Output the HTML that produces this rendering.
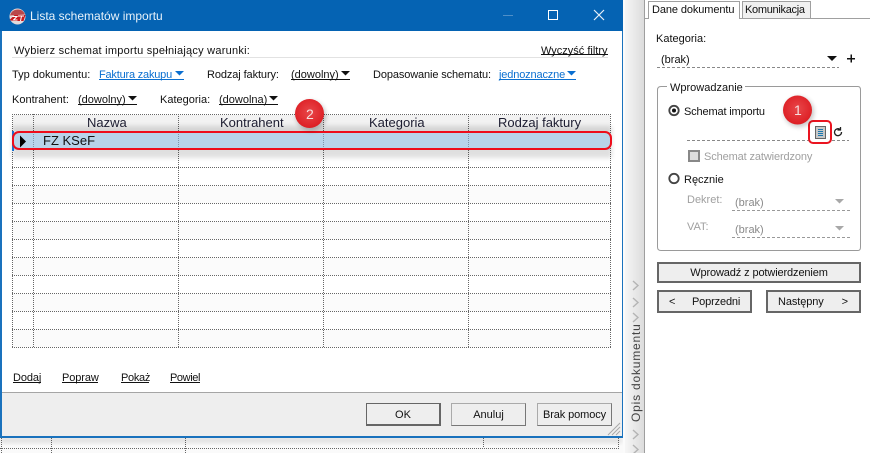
<!DOCTYPE html>
<html lang="pl"><head><meta charset="utf-8"><title>Lista schematów importu</title>
<style>
html,body{margin:0;padding:0}
body{width:870px;height:453px;overflow:hidden;position:relative;background:#fff;font-family:"Liberation Sans",sans-serif;font-size:11px;color:#111}
svg.l{position:absolute;left:0;top:0}
.t{position:absolute;white-space:nowrap;line-height:14px}
.b{color:#0a6fd0}
.g{color:#a0a0a0}
.h{font-size:13px;line-height:16px;color:#1c1c30}
.btn{position:absolute;box-sizing:border-box;background:#eee;text-align:center;font-size:11px;white-space:nowrap}
</style></head><body>
<svg class="l" width="870" height="453" viewBox="0 0 870 453" shape-rendering="crispEdges">
<defs>
<linearGradient id="st" x1="0" x2="1" y1="0" y2="0"><stop offset="0" stop-color="#f6f6f6"/><stop offset="1" stop-color="#dcdcdc"/></linearGradient>
<filter id="s2" x="-40%" y="-40%" width="180%" height="180%"><feGaussianBlur stdDeviation="2.5"/></filter>
<radialGradient id="rb" cx=".5" cy=".45" r=".6"><stop offset="0" stop-color="#e8474a"/><stop offset="1" stop-color="#dc1a20"/></radialGradient>
</defs>
<rect x="0" y="437" width="630" height="16" fill="#fafafa"/>
<g stroke="#666" stroke-dasharray="1 1" fill="none">
<path d="M0 448.500H619M1.500 438V453M51.500 438V453M185.500 438V453M483.500 438V448M618.500 438V448"/>
</g>
<rect x="0" y="437" width="622" height="6" fill="#000" opacity=".1" filter="url(#s2)"/>
<!-- side strip -->
<rect x="625" y="0" width="19" height="453" fill="url(#st)"/>
<rect x="623" y="0" width="2" height="453" fill="#fbfbfb"/>
<rect x="644" y="0" width="1" height="453" fill="#9e9e9e"/>
<g fill="none" stroke="#b4b4b4" stroke-width="1.400" shape-rendering="geometricPrecision">
<path d="M633 281l5 4.500-5 4.500M633 298l5 4.500-5 4.500M633 313l5 4.500-5 4.500M633 430l5 4.500-5 4.500M633 445l5 4.500-5 4.500"/>
</g>
<!-- window -->
<rect x="0" y="0" width="623" height="438" fill="#1a72bd"/>
<rect x="0" y="0" width="623" height="31" fill="#0563b3"/>
<rect x="2" y="31" width="620" height="361" fill="#fff"/>
<rect x="2" y="392" width="620" height="44" fill="#eee"/>
<rect x="2" y="392" width="620" height="1" fill="#a5a5a5"/>
<!-- separator -->
<rect x="12" y="57" width="596" height="1" fill="#e2e2e2"/>
<!-- titlebar controls -->
<rect x="503" y="15" width="10" height="1" fill="#4f8fc8"/>
<rect x="548.500" y="10.500" width="9" height="9" fill="none" stroke="#fff"/>
<path d="M594 10L604 20M604 10L594 20" stroke="#e8f0f8" stroke-width="1.200" shape-rendering="geometricPrecision"/>
<!-- logo -->
<g shape-rendering="geometricPrecision">
<circle cx="17.500" cy="16.500" r="8" fill="#e4dada"/>
<path d="M10 15.500C11 11.500 14 9.500 18 9.500c3.500 0 6 2 7 5z" fill="#b9474a"/>
<path d="M9.500 20l5-5h11l-2 6H13z" fill="#c8191f"/>
<path d="M12.500 16.500h4.500l-3.500 3.500h4M18 16h6M21.500 16l-1 5" stroke="#fff" stroke-width="1" fill="none"/>
</g>
<!-- underlines -->
<g fill="#111">
<rect x="541" y="54" width="67" height="1"/>
<rect x="291" y="79" width="59" height="1"/>
<rect x="78" y="104" width="59" height="1"/>
<rect x="219" y="104" width="59" height="1"/>
<rect x="13" y="382" width="28" height="1"/>
<rect x="62" y="382" width="36" height="1"/>
<rect x="121" y="382" width="28" height="1"/>
<rect x="170" y="382" width="30" height="1"/>
</g>
<g fill="#0a6fd0">
<rect x="99" y="79" width="85" height="1"/>
<rect x="499" y="79" width="77" height="1"/>
</g>
<!-- grid -->
<rect x="13" y="115" width="597" height="16" fill="#f2f2f2"/>
<g fill="#fbfbfb"><rect x="13" y="186" width="597" height="17"/><rect x="13" y="222" width="597" height="17"/><rect x="13" y="258" width="597" height="17"/><rect x="13" y="294" width="597" height="17"/><rect x="13" y="330" width="597" height="17"/></g>
<g stroke="#666" stroke-dasharray="1 1" fill="none">
<path d="M12 114.500H611M12 167.500H611M12 185.500H611M12 203.500H611M12 221.500H611M12 239.500H611M12 257.500H611M12 275.500H611M12 293.500H611M12 311.500H611M12 329.500H611M12 347.500H611"/>
<path d="M12.500 114V348M33.500 114V348M178.500 114V348M323.500 114V348M468.500 114V348M610.500 114V348"/>
</g>
<rect x="12" y="126" width="600" height="32" fill="#000" opacity=".12" filter="url(#s2)"/>
<rect x="13" y="132" width="597" height="18" fill="#b8d3e9"/>
<rect x="12" y="131" width="2" height="20" fill="#1a72d0"/>
<g stroke="#7d93a8" stroke-dasharray="1 1" fill="none"><path d="M33.500 132V150M178.500 132V150M323.500 132V150M468.500 132V150"/></g>
<path d="M20 135.500L26 141.500L20 147.500z" fill="#000" shape-rendering="geometricPrecision"/>
<rect x="13" y="132" width="598" height="17" rx="6" fill="none" stroke="#ee0d1b" stroke-width="2" shape-rendering="geometricPrecision"/>
<!-- red badge 2 -->
<g shape-rendering="geometricPrecision">
<circle cx="311" cy="116" r="15" fill="#000" opacity=".22" filter="url(#s2)"/>
<circle cx="309.500" cy="113.500" r="14.500" fill="url(#rb)"/>
<path d="M608 435L620 423M612 435L620 427M616 435L620 431" stroke="#a8a8a8" stroke-width="1" fill="none"/>
</g>
<!-- right panel -->
<rect x="645" y="18" width="225" height="435" fill="#fff"/>
<path d="M645 18.500H648M739 18.500H870" stroke="#a0a0a0"/>
<path d="M648.500 19V1.500H739.500V19" fill="#fff" stroke="#a0a0a0"/>
<path d="M742.500 18V1.500H810.500V18" fill="#f0f0f0" stroke="#a0a0a0"/>
<path d="M657 67.500H839" stroke="#888" stroke-dasharray="3 2"/>
<path d="M827 56h10l-5 5z" fill="#111" shape-rendering="geometricPrecision"/>
<path d="M847 58.500h8M851 54.500v8" stroke="#111" stroke-width="1.500"/>
<!-- group -->
<path d="M667 86.500H661Q657.500 86.500 657.500 90V247Q657.500 250.500 661 250.500H858Q860.500 250.500 860.500 247V90Q860.500 86.500 858 86.500H745" fill="none" stroke="#9a9a9a" shape-rendering="geometricPrecision"/>
<g shape-rendering="geometricPrecision">
<circle cx="674" cy="110.500" r="4.700" fill="#fff" stroke="#444" stroke-width="1.800"/><circle cx="674" cy="110.500" r="2" fill="#111"/>
<circle cx="674" cy="178.500" r="4.700" fill="#fff" stroke="#444" stroke-width="1.800"/>
</g>
<path d="M687 140.500H849" stroke="#888" stroke-dasharray="3 2"/>
<rect x="689" y="151" width="10" height="10" fill="#ddd" stroke="#888" stroke-width="2"/>
<path d="M732 210.500H850M732 237.500H850" stroke="#999" stroke-dasharray="3 2"/>
<path d="M835 199h9l-4.500 4.500zM835 226h9l-4.500 4.500z" fill="#a8a8a8" shape-rendering="geometricPrecision"/>
<!-- doc icon -->
<rect x="809" y="121" width="22" height="22" rx="4" fill="#fff" stroke="#ea1420" stroke-width="2" shape-rendering="geometricPrecision"/>
<rect x="815" y="126" width="11" height="13" fill="#c8c8c8"/>
<rect x="815.500" y="126.500" width="10" height="12" fill="none" stroke="#666"/>
<path d="M818 129.500h5M818 131.500h5M818 133.500h5M818 135.500h5" stroke="#1a78b0"/>
<path d="M841.500 132A3.500 3.500 0 1 1 840 129.300M840.500 127v3h-3" fill="none" stroke="#222" stroke-width="1.300" shape-rendering="geometricPrecision"/>
<!-- badge 1 -->
<g shape-rendering="geometricPrecision">
<circle cx="799" cy="112" r="15" fill="#000" opacity=".22" filter="url(#s2)"/>
<circle cx="797.500" cy="110" r="14.500" fill="url(#rb)"/>
</g>
<!-- filter arrows -->
<path d="M175 71h9l-4.500 4.500z" fill="#0a6fd0" shape-rendering="geometricPrecision"/>
<path d="M341 71h9l-4.500 4.500z" fill="#111" shape-rendering="geometricPrecision"/>
<path d="M567 71h9l-4.500 4.500z" fill="#0a6fd0" shape-rendering="geometricPrecision"/>
<path d="M128 96h9l-4.500 4.500z" fill="#111" shape-rendering="geometricPrecision"/>
<path d="M269 96h9l-4.500 4.500z" fill="#111" shape-rendering="geometricPrecision"/>
</svg>

<div class="t" style="left:30px;top:8px;font-size:12px;line-height:16px;color:#e8f2fa">Lista schematów importu</div>
<div class="t" style="left:14px;top:44px;letter-spacing:.24px">Wybierz schemat importu spełniający warunki:</div>
<div class="t" style="left:541px;top:44px">Wyczyść filtry</div>

<div class="t" style="left:12px;top:68px">Typ dokumentu:</div>
<div class="t b" style="left:99px;top:68px;letter-spacing:-.2px">Faktura zakupu</div>
<div class="t" style="left:207px;top:68px;letter-spacing:-.1px">Rodzaj faktury:</div>
<div class="t" style="left:291px;top:68px">(dowolny)</div>
<div class="t" style="left:373px;top:68px;letter-spacing:-.12px">Dopasowanie schematu:</div>
<div class="t b" style="left:499px;top:68px;letter-spacing:-.15px">jednoznaczne</div>

<div class="t" style="left:12px;top:93px">Kontrahent:</div>
<div class="t" style="left:78px;top:93px">(dowolny)</div>
<div class="t" style="left:160px;top:93px">Kategoria:</div>
<div class="t" style="left:219px;top:93px">(dowolna)</div>

<div class="t h" style="left:87px;top:115px">Nazwa</div>
<div class="t h" style="left:220px;top:115px">Kontrahent</div>
<div class="t h" style="left:369px;top:115px">Kategoria</div>
<div class="t h" style="left:498px;top:115px">Rodzaj faktury</div>
<div class="t" style="left:43px;top:133px;font-size:13px;line-height:16px">FZ KSeF</div>

<div class="t" style="left:306px;top:106px;font-size:14px;line-height:16px;color:#f6dede">2</div>
<div class="t" style="left:794px;top:102px;font-size:14px;line-height:16px;color:#f6dede">1</div>

<div class="t" style="left:13px;top:371px;letter-spacing:-.1px">Dodaj</div>
<div class="t" style="left:62px;top:371px;letter-spacing:-.1px">Popraw</div>
<div class="t" style="left:121px;top:371px;letter-spacing:-.3px">Pokaż</div>
<div class="t" style="left:170px;top:371px;letter-spacing:-.4px">Powiel</div>

<div class="btn" style="left:366px;top:403px;width:75px;height:23px;border:1px solid #666;border-bottom-width:2px;border-right-width:2px;line-height:22px">OK</div>
<div class="btn" style="left:451px;top:403px;width:75px;height:23px;border:1px solid #aaa;border-bottom-color:#777;border-right-color:#777;line-height:22px">Anuluj</div>
<div class="btn" style="left:537px;top:403px;width:75px;height:23px;border:1px solid #aaa;border-bottom-color:#777;border-right-color:#777;line-height:22px;letter-spacing:-.1px">Brak pomocy</div>

<div class="t" style="left:629px;top:422px;font-size:12px;line-height:14px;color:#444;letter-spacing:.8px;transform-origin:0 0;transform:rotate(-90deg)">Opis dokumentu</div>

<div class="t" style="left:652px;top:3px;letter-spacing:-.1px">Dane dokumentu</div>
<div class="t" style="left:745px;top:3px;letter-spacing:-.3px">Komunikacja</div>
<div class="t" style="left:656px;top:32px">Kategoria:</div>
<div class="t" style="left:661px;top:53px">(brak)</div>
<div class="t" style="left:670px;top:81px;background:#fff">Wprowadzanie</div>
<div class="t" style="left:684px;top:105px;letter-spacing:-.15px">Schemat importu</div>
<div class="t g" style="left:704px;top:150px;letter-spacing:-.12px">Schemat zatwierdzony</div>
<div class="t" style="left:684px;top:173px">Ręcznie</div>
<div class="t g" style="left:687px;top:193px">Dekret:</div>
<div class="t g" style="left:735px;top:196px;color:#8a8a8a">(brak)</div>
<div class="t g" style="left:687px;top:220px">VAT:</div>
<div class="t g" style="left:735px;top:223px;color:#8a8a8a">(brak)</div>

<div class="btn" style="left:657px;top:262px;width:204px;height:21px;border:2px solid #666;line-height:18px;letter-spacing:-.12px">Wprowadź z potwierdzeniem</div>
<div class="btn" style="left:657px;top:290px;width:95px;height:23px;border:2px solid #666;line-height:20px"><span style="position:absolute;left:10px">&lt;</span><span style="position:absolute;left:33px;letter-spacing:-.15px">Poprzedni</span></div>
<div class="btn" style="left:766px;top:290px;width:95px;height:23px;border:2px solid #666;line-height:20px"><span style="position:absolute;left:10px;letter-spacing:-.1px">Następny</span><span style="position:absolute;right:11px">&gt;</span></div>
</body></html>
